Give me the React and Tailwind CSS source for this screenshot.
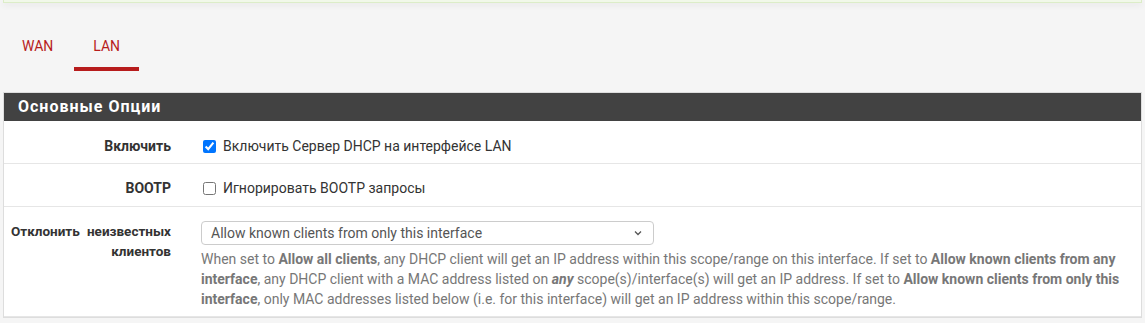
// App.jsx
const font = { fontFamily: 'Roboto, "Noto Sans", sans-serif' };

const Row = ({ label, children, className = '' }) => (
  <div className={`flex border-b border-[#e6e6e6] ${className}`}>
    <div className="w-[182px] shrink-0 pl-[7px] pr-[15px] text-right text-[14px] font-bold leading-[20px] text-[#333]">
      {label}
    </div>
    <div className="flex-1 pl-[15px] pr-[12px]">{children}</div>
  </div>
);

const App = () => {
  return (
    <div className="min-h-screen w-full bg-[#f5f5f5] px-[3px]" style={font}>
      {/* borde inferior del aviso superior */}
      <div className="h-[3px] border-x border-b border-[#dcedc8] bg-[#f1f8e9] shadow-[0_2px_6px_rgba(0,0,0,0.08)]" />

      {/* pestañas */}
      <nav className="mt-[33px] flex">
        <a className="px-[19px] pb-[11px] text-[14px] leading-[20px] text-[#b71c1c] border-b-4 border-transparent">
          WAN
        </a>
        <a className="ml-[2px] px-[19px] pb-[11px] text-[14px] leading-[20px] text-[#b71c1c] border-b-4 border-[#b71c1c]">
          LAN
        </a>
      </nav>

      {/* panel */}
      <div className="mt-[21px] border border-[#dddddd] bg-white">
        <div className="h-[28px] bg-[#424242] pl-[14px] text-[16px] font-bold leading-[28px] tracking-[1px] text-white">
          Основные Опции
        </div>

        <Row label="Включить" className="pt-[15px] pb-[7px]">
          <label className="flex items-center text-[14px] leading-[20px] text-[#333]">
            <input type="checkbox" defaultChecked className="ml-[2px] mr-[7px] h-[13px] w-[13px]" />
            Включить Сервер DHCP на интерфейсе LAN
          </label>
        </Row>

        <Row label="BOOTP" className="pt-[14px] pb-[8px]">
          <label className="flex items-center text-[14px] leading-[20px] text-[#333]">
            <input type="checkbox" className="ml-[2px] mr-[7px] h-[13px] w-[13px]" />
            Игнорировать BOOTP запросы
          </label>
        </Row>

        <Row
          label={
            <span className="block text-justify text-[13.5px] [text-align-last:right]">
              Отклонить неизвестных клиентов
            </span>
          }
          className="pt-[14px] pb-[7px]"
        >
          <div className="flex h-[24px] w-[453px] items-center justify-between rounded-[4px] border border-[#cccccc] bg-white pl-[9px] pr-[10px] text-[14px] text-[#555]">
            <span>Allow known clients from only this interface</span>
            <svg width="10" height="10" viewBox="0 0 10 10" fill="none" stroke="#555" strokeWidth="1.3">
              <path d="M2 3.5 L5 6.5 L8 3.5" />
            </svg>
          </div>
          <p className="mt-[4px] text-[14px] leading-[20px] text-[#777]">
            When set to <b>Allow all clients</b>, any DHCP client will get an IP address within this scope/range on this
            interface. If set to <b>Allow known clients from any interface</b>, any DHCP client with a MAC address listed
            on <b><i>any</i></b> scope(s)/interface(s) will get an IP address. If set to{' '}
            <b>Allow known clients from only this interface</b>, only MAC addresses listed below (i.e. for this interface)
            will get an IP address within this scope/range.
          </p>
        </Row>
      </div>
    </div>
  );
};

export default App;
